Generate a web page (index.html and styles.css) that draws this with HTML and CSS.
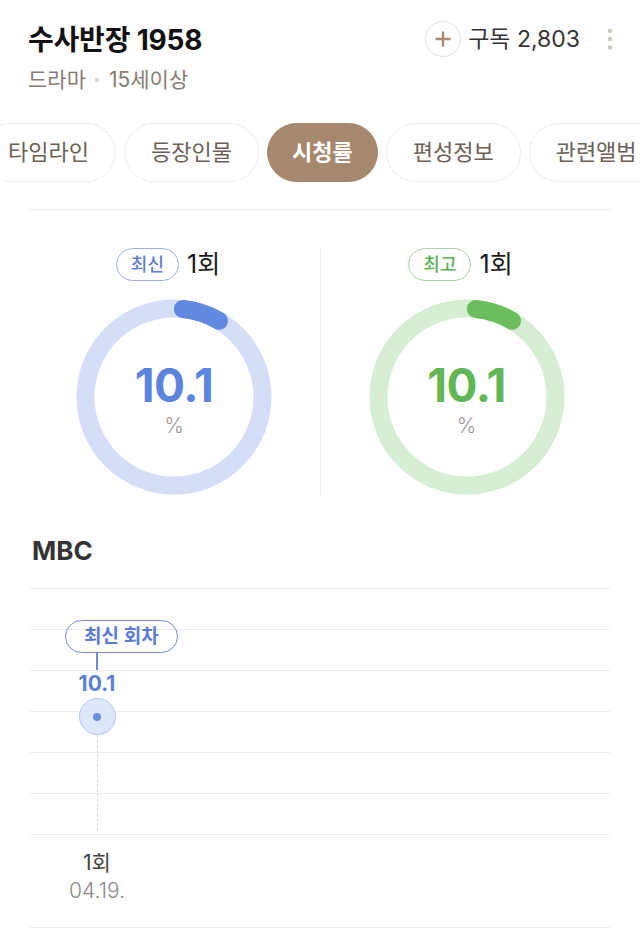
FILE: index.html
```html
<!DOCTYPE html>
<html lang="ko">
<head>
  <meta charset="UTF-8">
  <meta content="width=device-width, initial-scale=1.0" name="viewport">
  <title>수사반장 1958 시청률</title>
  <link rel="stylesheet" href="styles.css">
</head>
<body>
<header class="show-header">
  <div class="show-info">
    <h1 class="show-title">수사반장 1958</h1>
    <p class="show-meta">드라마<span class="sep"></span>15세이상</p>
  </div>
  <div class="show-actions">
    <button class="subscribe" type="button">
      <span class="subscribe-icon">
        <svg xmlns="http://www.w3.org/2000/svg" width="16" height="16" viewBox="0 0 16 16"><path d="M8 1.5v13M1.5 8h13" stroke="currentColor" stroke-width="2.4" stroke-linecap="round"/></svg>
      </span>
      구독 2,803
    </button>
    <button class="more" type="button" aria-label="더보기">
      <svg xmlns="http://www.w3.org/2000/svg" width="6" height="24" viewBox="0 0 6 24"><circle cx="3" cy="4" r="2.2"/><circle cx="3" cy="12" r="2.2"/><circle cx="3" cy="20.5" r="2.2"/></svg>
    </button>
  </div>
</header>

<nav class="tabs">
  <div class="tabs-track">
    <a class="tab" href="#">타임라인</a>
    <a class="tab" href="#">등장인물</a>
    <a class="tab is-active" href="#">시청률</a>
    <a class="tab" href="#">편성정보</a>
    <a class="tab" href="#">관련앨범</a>
  </div>
</nav>

<main class="ratings">
  <section class="summary">
    <div class="summary-item">
      <div class="summary-head">
        <span class="tag tag-blue">최신</span>
        <strong>1회</strong>
      </div>
      <div class="donut donut-blue">
        <svg xmlns="http://www.w3.org/2000/svg" width="196" height="196" viewBox="0 0 196 196">
          <circle class="track" cx="98" cy="98" r="88.5"/>
          <circle class="arc" cx="98" cy="98" r="88.5" transform="rotate(-90 98 98)"/>
        </svg>
        <div class="donut-value">
          <span class="num">10.1</span>
          <span class="unit">%</span>
        </div>
      </div>
    </div>
    <div class="summary-item">
      <div class="summary-head">
        <span class="tag tag-green">최고</span>
        <strong>1회</strong>
      </div>
      <div class="donut donut-green">
        <svg xmlns="http://www.w3.org/2000/svg" width="196" height="196" viewBox="0 0 196 196">
          <circle class="track" cx="98" cy="98" r="88.5"/>
          <circle class="arc" cx="98" cy="98" r="88.5" transform="rotate(-90 98 98)"/>
        </svg>
        <div class="donut-value">
          <span class="num">10.1</span>
          <span class="unit">%</span>
        </div>
      </div>
    </div>
  </section>

  <section class="channel">
    <h2 class="channel-name">MBC</h2>
    <div class="chart">
      <div class="plot">
        <div class="row"></div>
        <div class="row"></div>
        <div class="row"></div>
        <div class="row"></div>
        <div class="row"></div>
        <div class="row"></div>

        <div class="marker">
          <span class="marker-tag">최신 회차</span>
          <div class="point">
            <span class="stem"></span>
            <span class="point-value">10.1</span>
            <span class="point-dot"></span>
            <span class="point-guide"></span>
          </div>
        </div>
      </div>
      <div class="axis">
        <div class="axis-label">
          <span class="ep">1회</span>
          <span class="date">04.19.</span>
        </div>
      </div>
    </div>
  </section>
</main>
</body>
</html>
```

FILE: styles.css
```css
* {
  box-sizing: border-box;
}

body {
  background: #fff;
  color: #222;
  font-family: Inter, "Noto Sans CJK KR", sans-serif;
  margin: 0;
  overflow: hidden;
}

button {
  background: transparent;
  border: none;
  color: inherit;
  font: inherit;
  padding: 0;
}

/* header */
.show-header {
  align-items: flex-start;
  display: flex;
  justify-content: space-between;
  padding: 23px 22px 0 28px;
}

.show-title {
  color: #111;
  font-size: 28px;
  font-weight: 700;
  letter-spacing: -0.2px;
  line-height: 34px;
  margin: 0;
}

.show-meta {
  align-items: center;
  color: #877c73;
  display: flex;
  font-size: 21px;
  line-height: 26px;
  margin: 10px 0 0;

  & .sep {
    background: #d6d1cc;
    border-radius: 50%;
    block-size: 4px;
    inline-size: 4px;
    margin: 0 10px 0 9px;
  }
}

.show-actions {
  align-items: center;
  display: flex;
  gap: 22px;
  margin-top: -2px;
}

.subscribe {
  align-items: center;
  color: #333;
  display: flex;
  font-size: 23px;
  gap: 7px;
  line-height: 36px;
}

.subscribe-icon {
  border: 1.5px solid #e6ddd4;
  border-radius: 50%;
  block-size: 36px;
  color: #a88b70;
  display: grid;
  inline-size: 36px;
  place-content: center;

  & svg {
    display: block;
  }
}

.more {
  display: grid;
  fill: #cfc6bd;
  inline-size: 16px;
  place-content: center;
}

/* tabs */
.tabs {
  margin-top: 30px;
  overflow: hidden;
}

.tabs-track {
  display: flex;
  gap: 8px;
  margin-left: -19px;
}

.tab {
  border: 1.5px solid #efebe8;
  border-radius: 30px;
  color: #6b5f56;
  flex: none;
  font-size: 22px;
  line-height: 57px;
  padding: 0 26px;
  text-decoration: none;

  &.is-active {
    background: #a5886d;
    border-color: #a5886d;
    color: #fff;
    font-weight: 700;
    padding: 0 24px;
  }
}

/* ratings */
.ratings {
  border-top: 1px solid #efefef;
  margin: 27px 28px 0;
}

.summary {
  display: grid;
  grid-template-columns: 1fr 1fr;
  padding-top: 37px;
}

.summary-item {
  align-items: center;
  display: flex;
  flex-direction: column;
  gap: 18px;

  & + .summary-item {
    border-left: 1px solid #f0f0f0;
  }
}

.summary-head {
  align-items: center;
  display: flex;
  gap: 8px;
  padding-right: 12px;

  & strong {
    color: #1a1a1a;
    font-size: 25px;
    font-weight: 400;
    line-height: 34px;
  }
}

.tag {
  border: 1.5px solid;
  border-radius: 17px;
  font-size: 18px;
  font-weight: 500;
  line-height: 31px;
  padding: 0 14px;
}

.tag-blue {
  border-color: #9cb1e8;
  color: #5a7fd6;
}

.tag-green {
  border-color: #a5d7a0;
  color: #5fb257;
}

.donut {
  display: grid;

  & > * {
    grid-area: 1 / 1;
  }

  & svg {
    display: block;
  }

  & circle {
    fill: none;
    stroke-width: 18;
  }

  & .arc {
    stroke-dasharray: 38.2 600;
    stroke-dashoffset: -9;
    stroke-linecap: round;
  }
}

.donut-value {
  align-items: center;
  display: flex;
  flex-direction: column;
  place-self: center;
  padding-top: 4px;

  & .num {
    font-size: 46px;
    font-weight: 700;
    letter-spacing: -0.5px;
    line-height: 50px;
  }

  & .unit {
    color: #9a9a9a;
    font-size: 21px;
    font-weight: 300;
    line-height: 24px;
    margin-top: 4px;
  }
}

.donut-blue {
  & .track { stroke: #d4def6; }
  & .arc { stroke: #6189df; }
  & .num { color: #5b84dc; }
}

.donut-green {
  & .track { stroke: #d6eed3; }
  & .arc { stroke: #6bbd5d; }
  & .num { color: #62b655; }
}

/* channel chart */
.channel-name {
  color: #333;
  font-size: 26px;
  font-weight: 700;
  line-height: 32px;
  margin: 40px 0 0 4px;
}

.chart {
  margin: 21px 2px 0;
}

.plot {
  border-bottom: 1px solid #ebebeb;
  position: relative;

  & .row {
    block-size: 41px;
    border-top: 1px solid #ebebeb;
  }
}

.marker {
  align-items: flex-start;
  display: flex;
  flex-direction: column;
  left: 35px;
  position: absolute;
  top: 32px;
}

.marker-tag {
  border: 1.5px solid #6d8cd9;
  border-radius: 17px;
  color: #5b7bd2;
  font-size: 19px;
  font-weight: 600;
  line-height: 31px;
  padding: 0 18px;
  white-space: nowrap;
}

.point {
  align-items: center;
  display: flex;
  flex-direction: column;
  inline-size: 64px;
}

.stem {
  background: #6d8cd9;
  block-size: 17px;
  inline-size: 1.5px;
}

.point-value {
  color: #5b80d8;
  font-size: 21px;
  font-weight: 700;
  line-height: 28px;
}

.point-dot {
  background: #dde7f9;
  border: 1.5px solid #b3c6f0;
  border-radius: 50%;
  block-size: 37px;
  display: grid;
  inline-size: 37px;
  place-content: center;

  &::after {
    background: #6c8fdf;
    border-radius: 50%;
    block-size: 8px;
    content: "";
    inline-size: 8px;
  }
}

.point-guide {
  block-size: 96px;
  border-left: 1.5px dashed #dcdcdc;
}

.axis {
  border-bottom: 1px solid #ebebeb;
  block-size: 93px;
  padding: 14px 0 0 35px;
}

.axis-label {
  align-items: center;
  display: flex;
  flex-direction: column;
  inline-size: 64px;
  line-height: 28px;

  & .ep {
    color: #444;
    font-size: 21px;
  }

  & .date {
    color: #8a8a8a;
    font-size: 21px;
    font-weight: 300;
  }
}
```
